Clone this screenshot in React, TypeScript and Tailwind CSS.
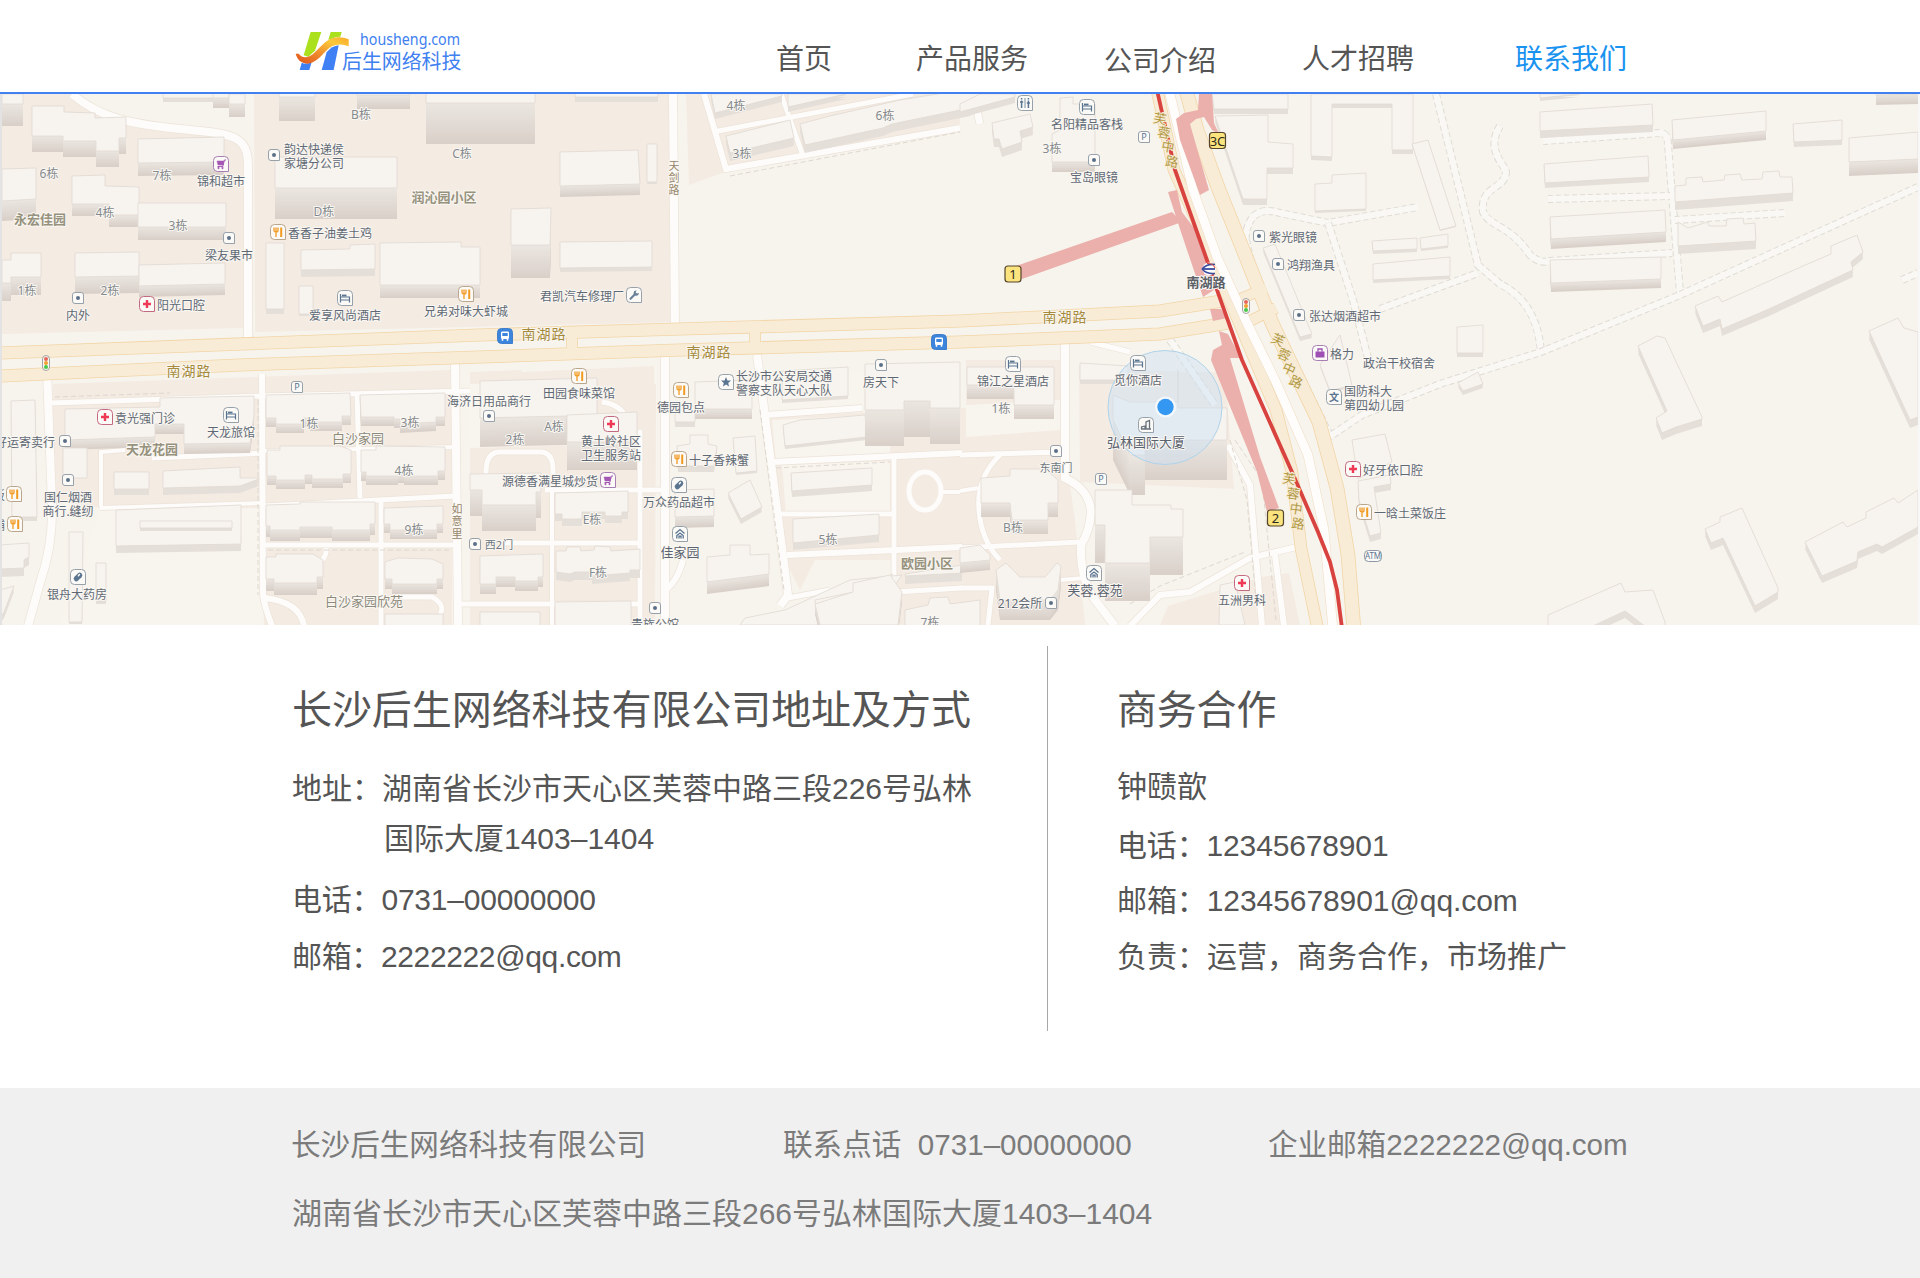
import React from "react";

type Building = [string, number];
type Label = [string, number, number, string?];
type Pin = [string, number, number];

const box = (x: number, y: number, w: number, h: number, side: number): Building => [
  `${x},${y} ${x + w},${y} ${x + w},${y + h} ${x},${y + h}`,
  side,
];

const estates = [
  "2,94 72,94 100,114 130,123 236,138 243,155 243,328 2,334",
  "254,94 670,94 673,322 255,332",
  "686,94 960,94 960,124 725,172 689,185",
  "53,384 452,370 452,625 264,625 262,508 100,508 53,500",
  "470,372 522,370 522,384 656,384 655,625 470,625",
  "480,374 654,366 654,625 480,625",
  "764,417 960,408 1065,412 1065,450 1075,520 1085,625 900,625 896,560 815,560 800,590 785,560",
  "1079,366 1180,372 1225,372 1234,489 1080,482",
  "1262,577 1289,573 1300,625 1160,625 1168,606",
  "966,360 1060,360 1062,430 966,437",
];

const creams = [
  "100,508 262,508 262,625 60,625",
  "764,385 862,372 864,406 766,412",
  "772,420 890,414 890,455 776,462",
  "782,465 890,461 890,512 786,515",
  "966,405 1060,400 1062,430 966,437",
  "470,384 530,382 597,380 597,445 470,448",
];

const buildings: Building[] = [
  box(2, 94, 21, 10, 22),
  ["32,106 64,106 64,112 95,113 95,118 126,117 126,138 119,138 119,151 96,151 96,141 63,141 63,136 32,136", 16],
  ["138,139 224,137 224,162 138,163", 13],
  ["2,169 36,168 36,199 2,201", 20],
  ["72,176 105,175 105,186 139,187 139,215 109,215 109,204 72,204", 12],
  box(138, 203, 88, 24, 13),
  ["2,260 11,260 11,253 41,253 41,277 11,277 11,283 2,283", 18],
  ["75,253 139,252 139,276 75,277", 17],
  ["139,265 225,263 225,284 139,286", 11],
  box(163, 90, 51, 8, 4),
  box(213, 90, 16, 8, 10),
  box(229, 94, 16, 10, 13),
  box(279, 85, 36, 12, 24),
  box(357, 85, 53, 10, 14),
  box(426, 88, 109, 15, 41),
  box(275, 157, 122, 31, 31),
  box(266, 243, 18, 66, 5),
  ["301,250 350,249 350,245 375,244 375,269 301,270", 7],
  box(299, 286, 14, 28, 2),
  ["380,243 461,242 461,247 480,247 480,285 380,285", 13],
  box(575, 88, 83, 9, 5),
  ["560,152 638,150 640,184 560,186", 11],
  box(647, 144, 10, 38, 2),
  ["511,209 551,208 550,245 511,245", 33],
  ["560,242 652,241 652,267 560,268", 4],
  ["711,94 782,94 782,96 715,113", 6],
  ["788,94 846,94 788,107", 5],
  ["726,136 790,120 794,138 730,153", 8],
  ["800,124 830,116 900,100 950,92 990,92 970,108 892,124 883,128 805,145", 8],
  ["980,94 1015,94 1015,97 960,112 960,104", 6],
  ["992,123 1030,114 1033,127 1020,131 1022,142 1002,149 999,139 994,139", 8],
  ["1060,98 1073,97 1073,104 1095,104 1095,162 1052,162 1052,134 1060,130", 10],
  ["1212,94 1288,94 1288,109 1214,109", 5],
  ["1215,116 1268,115 1268,142 1293,144 1293,168 1267,168 1267,199 1243,199", 6],
  ["1311,94 1413,94 1413,150 1392,150 1392,104 1332,104 1332,157 1311,156", 4],
  ["1332,175 1366,173 1366,209 1315,211 1315,184 1332,183", 2],
  ["1372,241 1417,238 1417,249 1373,251", 3],
  ["1420,238 1448,234 1448,246 1421,249", 2],
  ["1373,264 1450,257 1450,276 1373,280", 3],
  ["1412,144 1428,140 1456,226 1440,230", 1],
  ["1263,248 1275,244 1312,334 1300,337", 4],
  ["1540,94 1580,94 1540,98", 3],
  ["1540,112 1652,104 1653,125 1540,131", 7],
  ["1672,120 1766,111 1766,131 1673,140", 9],
  ["1793,124 1842,120 1842,140 1794,142", 5],
  ["1849,138 1918,132 1918,159 1849,162", 14],
  ["1876,88 1918,88 1918,94 1876,95", 10],
  ["1544,164 1648,156 1649,177 1545,183", 5],
  ["1550,217 1665,210 1666,232 1551,239", 10],
  ["1550,260 1661,257 1661,279 1551,283", 9],
  ["1675,186 1686,185 1686,178 1702,177 1703,182 1724,180 1725,175 1740,174 1742,180 1762,179 1763,172 1779,171 1780,177 1792,177 1793,193 1675,202", 8],
  ["1678,222 1688,228 1708,222 1709,226 1726,226 1727,219 1743,218 1744,224 1755,223 1756,241 1678,246", 8],
  ["1457,327 1483,325 1483,353 1457,353", 4],
  ["1695,306 1718,296 1722,302 1803,266 1831,254 1831,246 1857,235 1863,252 1851,262 1853,270 1812,289 1769,309 1722,329 1720,319 1703,326", 7],
  ["1869,331 1898,318 1904,328 1918,332 1918,417 1910,420", 8],
  ["1638,346 1657,336 1665,338 1702,417 1702,419 1676,427 1662,433 1656,418 1667,411", 7],
  ["1458,383 1478,372 1483,384 1463,391", 4],
  ["1705,529 1720,522 1720,517 1742,508 1778,588 1778,592 1755,606 1723,538 1711,543", 7],
  ["1805,542 1843,522 1847,527 1866,518 1866,512 1894,498 1898,503 1918,490 1918,527 1911,531 1882,547 1877,544 1858,552 1857,561 1822,576", 7],
  ["1548,615 1621,583 1625,592 1653,590 1665,622 1665,630 1650,630 1625,611 1595,625 1560,635 1548,635", 7],
  ["11,401 35,400 37,517 12,517", 4],
  ["65,409 160,407 160,398 254,396 254,415 250,443 184,444 184,424 155,424 155,437 65,440", 10],
  box(63, 448, 24, 30, 0),
  box(114, 472, 35, 17, 6),
  ["163,471 240,467 240,478 259,478 259,479 240,486 163,488", 7],
  ["116,510 241,505 241,544 116,546", 7],
  box(140, 521, 92, 7, 3),
  ["69,532 83,532 82,622 69,622", 2],
  box(96, 563, 10, 38, 3),
  ["0,545 29,543 29,557 24,560 24,568 0,569", 8],
  ["0,590 14,586 4,612 0,618", 6],
  ["266,395 350,393 351,416 342,416 342,422 310,422 310,418 304,418 304,424 276,424 276,418 266,418", 9],
  ["360,395 445,393 445,417 436,417 436,422 400,424 400,419 394,419 394,417 361,417", 9],
  ["267,450 280,450 280,446 340,446 351,450 351,474 343,474 343,479 312,479 312,475 305,475 305,480 276,480 276,476 267,476", 9],
  ["361,450 376,450 376,446 445,447 445,471 438,471 438,476 404,476 404,474 398,474 398,476 366,476 366,472 361,472", 9],
  ["266,505 300,504 300,502 375,502 375,524 370,524 370,530 332,530 332,527 300,527 300,530 270,530 270,526 266,526", 11],
  ["384,508 443,506 443,524 437,524 437,530 390,530 390,524 384,524", 9],
  ["266,557 276,557 276,554 313,554 323,560 323,577 317,577 317,583 274,583 274,579 266,579", 12],
  ["385,562 398,558 432,559 443,564 443,579 437,579 437,584 392,584 392,579 385,579", 10],
  box(385, 614, 58, 20, 0),
  ["480,381 597,378 597,422 567,442 567,416 480,418", 29],
  ["567,415 637,412 637,442 567,442", 28],
  ["470,474 541,473 541,492 536,492 536,505 482,505 482,490 470,490", 26],
  ["555,493 628,491 628,512 622,512 622,516 605,516 605,512 582,512 582,519 562,519 562,514 555,514", 7],
  ["556,551 566,551 567,547 580,547 581,551 594,550 595,546 610,547 611,551 640,549 640,570 630,570 630,573 592,576 592,572 575,572 570,574 556,572", 8],
  ["480,556 543,554 543,577 538,577 538,581 515,581 515,577 496,577 496,584 480,584", 10],
  ["480,612 540,612 540,630 480,630", 0],
  ["555,602 631,601 631,630 555,630", 0],
  ["695,382 752,380 752,409 695,409", 10],
  box(675, 406, 20, 16, 5),
  ["782,371 848,367 848,396 782,400", 3],
  ["677,446 690,444 690,435 708,435 708,444 717,446 714,466 678,466", 6],
  ["733,438 755,436 757,471 736,473", 2],
  ["675,490 714,489 714,516 675,517", 11],
  ["728,493 750,480 762,507 741,519", 5],
  ["783,425 800,420 830,418 865,415 867,437 785,446", 3],
  ["791,473 872,468 872,485 792,491", 6],
  ["793,519 879,514 879,535 793,543", 7],
  ["707,557 730,555 730,545 750,545 750,555 769,554 769,574 707,582", 12],
  ["865,364 960,362 960,408 930,408 930,401 904,401 904,410 865,410", 36],
  ["850,580 902,575 895,585 890,576 893,574 854,592 815,600 818,625 740,625 745,618 785,610", 0],
  ["815,604 853,592 853,583 890,575 902,592 898,625 820,625", 10],
  ["905,574 962,565 962,573 905,576", 8],
  ["905,610 928,605 930,598 948,597 950,604 980,600 980,630 905,630", 0],
  ["967,367 1054,367 1054,405 1014,405 1014,385 967,385", 14],
  ["1080,363 1128,366 1128,380 1080,380", 4],
  ["1113,395 1130,402 1178,402 1178,370 1178,408 1227,408 1227,440 1145,440 1145,455 1130,455 1113,420", 40],
  ["981,478 1010,476 1010,469 1045,469 1058,480 1058,503 1048,503 1048,520 1012,520 1010,503 981,503", 14],
  ["1095,490 1132,490 1132,505 1171,505 1171,509 1183,509 1183,537 1150,537 1150,563 1105,563 1105,525 1095,525", 38],
  ["996,570 1006,563 1020,577 1045,577 1057,563 1061,566 1058,590 1050,600 1000,600", 20],
  ["960,548 980,545 990,555 990,560 960,563", 10],
  ["1220,585 1235,582 1245,625 1219,625", 0],
  ["1352,440 1385,434 1392,462 1358,479", 0],
  ["1358,481 1390,475 1391,484 1374,487 1381,533 1370,536 1359,500", 6],
  ["1320,365 1340,335 1352,385 1330,391", 2],
];

const lanes: [string, number][] = [
  ["M72,94 C100,118 130,124 180,129 S248,134 248,165 V340", 8],
  ["M673,94 L675,330", 8],
  ["M704,94 L726,169 L960,128", 6],
  ["M713,132 L913,94", 5],
  ["M781,94 L802,153", 5],
  ["M973,94 L980,124", 7],
  ["M47,372 L52,505 Q53,545 40,583 L28,626", 8],
  ["M50,403 L262,396 L470,391", 5],
  ["M262,374 L263,595 Q264,605 272,626", 6],
  ["M265,598 Q300,602 304,626", 6],
  ["M326,548 Q327,555 322,560", 5],
  ["M357,392 L360,498", 5],
  ["M381,500 V626", 5],
  ["M265,506 L455,496", 5],
  ["M265,545 H455", 5],
  ["M100,508 L262,503", 4],
  ["M101,507 V452 L125,450", 4],
  ["M152,458 L265,453", 5],
  ["M265,451 L460,447", 4],
  ["M455,362 L458,626", 8],
  ["M402,597 H432 Q446,605 440,614", 5],
  ["M665,355 V626", 8],
  ["M757,355 L763,400 L788,595 L780,606", 8],
  ["M765,415 L862,408", 6],
  ["M772,462 L962,453", 6],
  ["M780,514 H892", 5],
  ["M787,555 L962,547", 6],
  ["M788,598 L830,590", 5],
  ["M894,458 V592 L962,588", 5],
  ["M943,492 H960", 4],
  ["M460,604 H640", 5],
  ["M552,486 V626", 4],
  ["M640,430 V626", 5],
  ["M486,492 V470 Q487,452 500,452 H540 Q553,452 553,470 V480", 5],
  ["M500,543 H640", 5],
  ["M545,490 H662", 5],
  ["M602,402 Q625,405 629,426", 5],
  ["M683,560 Q678,580 666,590", 6],
  ["M1065,342 V478 Q1090,490 1091,512 Q1090,530 1081,545 Q1080,580 1095,600 L1115,626", 8],
  ["M960,548 L1080,542", 5],
  ["M960,455 L1062,452", 5],
  ["M1000,455 Q976,478 979,510 Q981,540 1000,560", 5],
  ["M960,491 L978,488", 4],
  ["M960,588 H992 L988,625", 5],
  ["M1060,580 L1085,578", 4],
  ["M1130,626 L1160,595 L1190,592 L1250,558 L1297,547", 6],
  ["M1228,445 L1250,485 L1262,626", 6],
  ["M1275,555 L1284,626", 6],
  ["M1090,342 L1130,352", 5],
];

const dashedLanes = [
  "M1248,270 C1238,215 1258,206 1280,213 L1328,223 L1418,207",
  "M1328,223 L1353,300 L1370,366",
  "M1246,240 L1256,285 L1300,375 L1330,436",
  "M1380,309 L1478,273",
  "M1436,94 L1478,265 L1500,284 Q1537,302 1541,352",
  "M1500,126 C1485,150 1505,165 1506,172 C1505,190 1480,185 1483,212 C1490,227 1510,225 1530,255 Q1540,264 1550,261 L1672,253",
  "M1543,141 L1660,133 Q1668,133 1668,145 L1680,293",
  "M1548,199 L1670,196",
  "M1675,220 L1785,213",
  "M1326,439 L1362,415 L1440,384 L1541,352 L1680,295 L1918,187",
  "M1902,280 L1918,273",
  "M1170,340 L1215,405",
];

const dashedEdges = [
  "M730,176 L960,132",
  "M55,397 L170,393",
  "M258,400 V595",
  "M268,550 H450",
  "M776,468 L890,462",
  "M760,410 L784,590",
  "M1230,440 L1247,500 L1256,600",
  "M1235,440 L1262,480 L1276,620",
  "M1130,604 L1160,586 L1245,552",
];

const highways: [string, number][] = [
  ["M0,353 L480,335 L680,329 L960,321 L1160,311 L1222,301", 11.5],
  ["M0,376 L240,365 L480,357 L680,350 L960,342 L1160,334 L1228,323", 11.5],
  ["M572,328 V352", 10],
  ["M755,325 V348", 10],
  ["M1240,299 L1266,288", 10],
  ["M1250,321 L1276,308", 10],
  ["M1157,90 L1174,170 L1198,223 L1213,263 L1234,310 L1255,360 L1276,410 L1292,472 L1301,548 L1318,630", 11],
  ["M1186,90 L1197,130 L1219,190 L1246,257 L1272,323 L1287,355 L1319,422 L1337,488 L1348,555 L1354,630", 13],
];

const medians = ["M1169,90 L1193,190 L1217,257 L1247,323 L1275,380 L1308,455 L1324,530 L1333,630"];

const platforms = [
  "1013,267 1172,212 1182,222 1022,279",
  "1168,192 1177,190 1182,212 1194,228 1206,258 1214,290 1203,297 1187,250 1178,223",
  "1210,309 1221,309 1227,318 1213,321",
  "1219,331 1228,334 1241,358 1230,358 1260,457 1279,508 1267,512 1257,472 1211,360 1213,350 1222,345",
  "1176,119 1184,113 1198,110 1199,94 1212,94 1214,123 1219,134 1212,130 1204,117 1196,119 1190,124 1209,190 1200,195 1180,140",
];

const pois: Label[] = [
  ["内外", 78, 315], ["阳光口腔", 181, 305], ["锦和超市", 221, 181], ["梁友果市", 229, 255],
  ["韵达快递侯", 314, 149], ["家塘分公司", 314, 163], ["香香子油姜土鸡", 330, 233],
  ["爱享风尚酒店", 345, 315], ["兄弟对味大虾城", 466, 311], ["君凯汽车修理厂", 582, 296],
  ["名阳精品客栈", 1087, 124], ["宝岛眼镜", 1094, 177], ["紫光眼镜", 1293, 237],
  ["鸿翔渔具", 1311, 265], ["张达烟酒超市", 1345, 316], ["格力", 1342, 354],
  ["政治干校宿舍", 1399, 363], ["袁光强门诊", 145, 418], ["天龙旅馆", 231, 432],
  ["好运寄卖行", 25, 442], ["国仁烟酒", 68, 497], ["商行.缝纫", 68, 511], ["银舟大药房", 77, 594],
  ["海济日用品商行", 489, 401], ["田园食味菜馆", 579, 393], ["黄土岭社区", 611, 441],
  ["卫生服务站", 611, 455], ["源德香满星城炒货", 550, 481], ["德园包点", 681, 407],
  ["长沙市公安局交通", 784, 376], ["警察支队天心大队", 784, 390], ["房天下", 881, 382],
  ["十子香辣蟹", 719, 460], ["万众药品超市", 679, 502], ["佳家园", 680, 552, "mid"],
  ["贵族公馆", 655, 624], ["锦江之星酒店", 1013, 381], ["觅你酒店", 1138, 380],
  ["弘林国际大厦", 1146, 442, "mid"], ["东南门", 1056, 467, "small"], ["212会所", 1020, 603],
  ["芙蓉.蓉苑", 1095, 590, "mid"], ["五洲男科", 1242, 600], ["国防科大", 1368, 391],
  ["第四幼儿园", 1374, 405], ["好牙依口腔", 1393, 470], ["一晗土菜饭庄", 1410, 513],
  ["西2门", 499, 544, "small"], ["饭", -1, 495], ["铺", -1, 525],
  ["6栋", 49, 173, "block"], ["7栋", 162, 175, "block"], ["4栋", 105, 212, "block"],
  ["3栋", 178, 225, "block"], ["1栋", 27, 290, "block"], ["2栋", 110, 290, "block"],
  ["B栋", 361, 114, "block"], ["C栋", 462, 153, "block"], ["D栋", 324, 211, "block"],
  ["4栋", 736, 105, "block"], ["6栋", 885, 115, "block"], ["3栋", 742, 153, "block"],
  ["3栋", 1052, 148, "block"], ["1栋", 309, 423, "block"], ["3栋", 410, 422, "block"],
  ["4栋", 404, 470, "block"], ["9栋", 414, 529, "block"], ["A栋", 554, 426, "block"],
  ["2栋", 515, 439, "block"], ["E栋", 592, 519, "block"], ["F栋", 598, 572, "block"],
  ["5栋", 828, 539, "block"], ["7栋", 930, 622, "block"], ["1栋", 1001, 408, "block"],
  ["B栋", 1013, 527, "block"],
  ["永宏佳园", 40, 219, "estate"], ["润沁园小区", 444, 197, "estate"],
  ["天龙花园", 152, 449, "estate"], ["欧园小区", 927, 563, "estate"],
  ["白沙家园", 358, 438, "garden"], ["白沙家园欣苑", 364, 601, "garden"],
  ["南湖路", 544, 334, "road"], ["南湖路", 709, 352, "road"], ["南湖路", 1065, 317, "road"],
  ["南湖路", 189, 371, "road"], ["南湖路", 1206, 282, "station"],
  ["天", 674, 165, "lane"], ["剑", 674, 177, "lane"], ["路", 674, 189, "lane"],
  ["如", 457, 508, "lane"], ["意", 457, 520, "lane"], ["里", 457, 533, "lane"],
];

const labelClass: Record<string, string> = {
  poi: "fill-[#5f6975] text-[12px]",
  mid: "fill-[#5a6370] text-[13px]",
  small: "fill-[#6f7780] text-[11px]",
  block: "fill-[#858a8e] text-[12px]",
  estate: "fill-[#96927e] text-[13px] font-bold",
  garden: "fill-[#8d8a7c] text-[13px]",
  road: "fill-[#a58a3c] text-[14px] tracking-[1px]",
  station: "fill-[#5b5f68] text-[13px] font-bold",
  lane: "fill-[#97876d] text-[11px]",
};

const avenue: [string, number, number, number][] = [
  ["芙", 1160, 119, 10], ["蓉", 1164, 133, 10], ["中", 1168, 147, 10], ["路", 1172, 162, 10],
  ["芙", 1278, 340, 24], ["蓉", 1284, 355, 24], ["中", 1289, 369, 24], ["路", 1296, 382, 24],
  ["芙", 1289, 479, 8], ["蓉", 1293, 494, 8], ["中", 1296, 509, 8], ["路", 1298, 524, 8],
];

const pins: Pin[] = [
  ["dot", 274, 155], ["dot", 229, 238], ["dot", 78, 298], ["dot", 65, 441], ["dot", 68, 480],
  ["dot", 1094, 160], ["dot", 1259, 236], ["dot", 1278, 264], ["dot", 1299, 315], ["dot", 489, 416],
  ["dot", 881, 365], ["dot", 655, 608], ["dot", 1056, 451], ["dot", 1051, 603], ["dot", 475, 544],
  ["food", 278, 232], ["food", 466, 294], ["food", 14, 494], ["food", 15, 524], ["food", 579, 376],
  ["food", 681, 390], ["food", 679, 459], ["food", 1364, 512],
  ["hotel", 345, 298], ["hotel", 1087, 107], ["hotel", 231, 415], ["hotel", 1013, 364], ["hotel", 1138, 363],
  ["cart", 221, 164], ["cart", 608, 480],
  ["cross", 147, 304], ["cross", 105, 417], ["cross", 611, 424], ["cross", 1353, 469], ["cross", 1242, 583],
  ["bus", 505, 336], ["bus", 939, 342],
  ["wrench", 634, 295], ["pill", 78, 577], ["pill", 679, 485], ["star", 726, 382],
  ["house", 680, 534], ["house", 1094, 573],
  ["park", 297, 387], ["park", 1101, 479], ["park", 1144, 137],
  ["toilet", 1025, 103], ["bag", 1320, 353], ["school", 1334, 397], ["atm", 1373, 556],
  ["tower", 1146, 425], ["signal", 46, 363], ["signal", 1246, 306],
];

const frameColor: Record<string, string> = {
  food: "#b9a68c", cross: "#c46a80", cart: "#a77fb4", bag: "#a77fb4", bus: "#3f7fcb",
};

function Glyph({ kind }: { kind: string }) {
  switch (kind) {
    case "dot":
      return <circle r={2} fill="#5b7088" />;
    case "food":
      return (
        <g fill="none" stroke="#f29a1f">
          <path d="M-4,-4.5 V-1.4 Q-4,0 -2,0 Q0,0 0,-1.4 V-4.5 M-2,-4.5 V5" strokeWidth={1.3} />
          <path d="M3.2,-4.5 V5" strokeWidth={2} />
        </g>
      );
    case "hotel":
      return (
        <g fill="none" stroke="#5b7591" strokeWidth={1.2}>
          <path d="M-4.5,-4 V4.5 M-4.5,2 H4.5 M4.5,4.5 V-1 H-4.5" />
          <path d="M-3,-2.5 H1.5" strokeWidth={1.8} />
        </g>
      );
    case "cart":
      return (
        <g stroke="#a458b4" fill="#a458b4">
          <path d="M5,-4 H3.4 L1.8,2.5 H-3.5" fill="none" strokeWidth={1} />
          <path d="M-4,-3 H3 L2,1 H-3 Z" strokeWidth={0.5} />
          <circle cx={-2.5} cy={4} r={0.7} />
          <circle cx={1.5} cy={4} r={0.7} />
        </g>
      );
    case "cross":
      return <path d="M-4,0 H4 M0,-4 V4" stroke="#ee3a55" strokeWidth={2.4} />;
    case "bus":
      return (
        <g>
          <rect x={-4} y={-4.5} width={8} height={7.5} rx={1.2} fill="#fff" />
          <rect x={-2.7} y={-3} width={5.4} height={3} fill="#3c84dc" />
          <path d="M-2.5,3 V4.8 M2.5,3 V4.8" stroke="#fff" strokeWidth={1.6} />
        </g>
      );
    case "wrench":
      return (
        <g>
          <path d="M-3.5,3.8 L1.5,-1.2" stroke="#6b8299" strokeWidth={2.2} strokeLinecap="round" />
          <path d="M2.5,-4.5 A2.6,2.6 0 1 0 4.8,-2 L2.8,-1.4 L1.6,-2.6 Z" fill="#6b8299" />
        </g>
      );
    case "pill":
      return (
        <g transform="rotate(-45)">
          <rect x={-5} y={-2.6} width={10} height={5.2} rx={2.6} fill="#5b7591" />
          <rect x={0.5} y={-1.4} width={3} height={1.4} rx={0.7} fill="#fff" />
        </g>
      );
    case "star":
      return <path d="M0,-5 L1.4,-1.6 5,-1.4 2.2,0.9 3.1,4.4 0,2.5 -3.1,4.4 -2.2,0.9 -5,-1.4 -1.4,-1.6 Z" fill="#5b7591" />;
    case "house":
      return (
        <g fill="none" stroke="#5b7591" strokeWidth={1.3}>
          <path d="M-4.5,-0.5 L0,-4.5 L4.5,-0.5" />
          <path d="M-3.2,4.5 V1.6 L0,-1 L3.2,1.6 V4.5 M-1,4.5 V2.2 H1 V4.5" />
        </g>
      );
    case "toilet":
      return (
        <g fill="none" stroke="#5b7591" strokeWidth={1.5}>
          <path d="M0,-5 V5" strokeWidth={0.8} />
          <path d="M-3.4,-2.5 V5 M3.4,-2.5 V5 M-5,-1 H-1.8 M1.8,0 H5" />
          <path d="M-3.4,-5 V-3.6 M3.4,-5 V-3.6" />
        </g>
      );
    case "bag":
      return (
        <g>
          <rect x={-4.5} y={-1.5} width={9} height={6} fill="#9d4fb4" />
          <path d="M-2,-1.5 V-4 H2 V-1.5" fill="none" stroke="#9d4fb4" strokeWidth={1.3} />
        </g>
      );
    case "tower":
      return <path d="M-5,4 H5 M-4.5,4 V2 L-1,1 V4 M0,4 V-3 L3.5,-4.5 V4" fill="none" stroke="#6a727c" strokeWidth={1.3} />;
    default:
      return null;
  }
}

function MapPin({ pin: [kind, x, y] }: { pin: Pin }) {
  if (kind === "signal") {
    return (
      <g transform={`translate(${x} ${y})`}>
        <rect x={-3.5} y={-7.5} width={7} height={15} rx={3.5} fill="#fbf8f3" stroke="#8e8f90" strokeWidth={0.8} />
        <circle cy={-4} r={2} fill="#e4685a" />
        <circle r={2} fill="#f0a030" />
        <circle cy={4} r={2} fill="#48c848" />
      </g>
    );
  }
  if (kind === "atm") {
    return (
      <g transform={`translate(${x} ${y})`}>
        <rect x={-8.5} y={-5.5} width={17} height={11} rx={4} fill="#fbfaf8" stroke="#8c98a4" />
        <text y={3.2} textAnchor="middle" className="fill-[#5b7591] text-[8px]">ATM</text>
      </g>
    );
  }
  const small = kind === "dot" || kind === "park";
  const r = small ? 5.5 : 7.5;
  const c = small ? 2.5 : 4;
  const frame = `M${-r + c},${-r} H${r - c} Q${r},${-r} ${r},${-r + c} V${r} H${-r + c} Q${-r},${r} ${-r},${r - c} V${-r + c} Q${-r},${-r} ${-r + c},${-r} Z`;
  return (
    <g transform={`translate(${x} ${y})`}>
      <path d={frame} fill={kind === "bus" ? "#3c84dc" : "#fbfaf7"} stroke={frameColor[kind] ?? "#97a1aa"} />
      <Glyph kind={kind} />
      {kind === "park" && <text y={3.4} textAnchor="middle" className="fill-[#5b7591] text-[9px]">P</text>}
      {kind === "school" && <text y={3.8} textAnchor="middle" className="fill-[#5b7591] text-[10px] font-bold">文</text>}
    </g>
  );
}

function mix(t: number) {
  const from = [236, 231, 226];
  const to = [217, 208, 201];
  return `rgb(${from.map((v, i) => Math.round(v + (to[i] - v) * t)).join(",")})`;
}

function Block({ shape: [points, side] }: { shape: Building }) {
  const layers: React.ReactNode[] = [];
  for (let d = side; d > 0; d -= 2) {
    const tone = side > 8 ? d / side : 0.35;
    layers.push(<polygon key={d} points={points} transform={`translate(0 ${d})`} fill={mix(tone)} />);
  }
  return (
    <g>
      {layers}
      <polygon points={points} fill="#f7f4f0" stroke="#e2dbd4" strokeWidth={0.9} />
    </g>
  );
}

function ExitBadge({ x, y, text }: { x: number; y: number; text: string }) {
  return (
    <g transform={`translate(${x} ${y})`}>
      <rect x={-8} y={-8} width={16} height={16} rx={3} fill="#fbe37e" stroke="#54452c" strokeWidth={1.2} />
      <text y={5} textAnchor="middle" className="fill-[#2d2820] text-[13px]">{text}</text>
    </g>
  );
}

function CityMap() {
  return (
    <svg
      viewBox="0 94 1920 531"
      className="block h-[531px] w-full shrink-0 font-['Noto_Sans','Noto_Sans_CJK_SC',sans-serif]"
    >
      <rect x={0} y={94} width={1920} height={531} fill="#f7f4ed" />
      {estates.map((p) => <polygon key={p} points={p} fill="#f4ebe3" />)}
      {creams.map((p) => <polygon key={p} points={p} fill="#f8f4ee" />)}

      {dashedLanes.map((d) => (
        <g key={d} fill="none">
          <path d={d} stroke="#dfdcd5" strokeWidth={8} strokeDasharray="5 3" />
          <path d={d} stroke="#faf8f4" strokeWidth={6} />
        </g>
      ))}
      {lanes.map(([d, w]) => <path key={d} d={d} fill="none" stroke="#ece3d8" strokeWidth={w + 1.4} />)}
      {lanes.map(([d, w]) => <path key={d} d={d} fill="none" stroke="#fdfcfa" strokeWidth={w} />)}
      {dashedEdges.map((d) => <path key={d} d={d} fill="none" stroke="#ded8cf" strokeDasharray="5 3" />)}
      <ellipse cx={925} cy={491} rx={16} ry={19} fill="none" stroke="#fdfcfa" strokeWidth={5} />

      {buildings.map((b, i) => <Block key={i} shape={b} />)}

      {highways.map(([d, w]) => <path key={d} d={d} fill="none" stroke="#f2d5a6" strokeWidth={w + 1.6} />)}
      {highways.map(([d, w]) => <path key={d} d={d} fill="none" stroke="#f8ecd7" strokeWidth={w} />)}
      {medians.map((d) => <path key={d} d={d} fill="none" stroke="#f1dfc8" strokeWidth={10} />)}
      {medians.map((d) => <path key={d} d={d} fill="none" stroke="#fefdfb" strokeWidth={8.8} />)}
      {platforms.map((p) => <polygon key={p} points={p} fill="#ebb0ab" />)}
      <path
        d="M1157,90 L1175,170 L1208,263 L1217,290 L1242,360 L1292,472 L1318,532 L1330,562 L1337,590 L1342,628"
        fill="none"
        stroke="#d9433f"
        strokeWidth={3.8}
        strokeLinejoin="round"
      />

      <circle cx={1165} cy={407.5} r={57} fill="#c9e1f5" fillOpacity={0.45} stroke="#b0d3ea" />

      <g stroke="#faf7f2" strokeWidth={2} strokeLinejoin="round" className="[paint-order:stroke]">
        {pois.map(([text, x, y, kind], i) => (
          <text key={i} x={x} y={y + 4.5} textAnchor="middle" className={labelClass[kind ?? "poi"]}>
            {text}
          </text>
        ))}
        {avenue.map(([text, x, y, angle], i) => (
          <text
            key={i}
            x={0}
            y={4.5}
            textAnchor="middle"
            transform={`translate(${x} ${y}) rotate(${angle})`}
            className="fill-[#b29a45] text-[13px]"
            stroke="#f8ecd7"
          >
            {text}
          </text>
        ))}
      </g>

      {pins.map((p, i) => <MapPin key={i} pin={p} />)}

      <circle cx={1165.5} cy={407} r={10.5} fill="#f3f8fc" />
      <circle cx={1165.5} cy={407} r={8.2} fill="#3498f3" />

      <g transform="translate(1209 269)">
        <circle r={6.5} fill="#fff" />
        <path d="M-7,0 Q-2,-5.5 6,-4.5 M-7,0 Q-2,5.5 6,4.5" fill="none" stroke="#3a4b9c" strokeWidth={1.6} />
        <path d="M-6,0 H6" stroke="#3a4b9c" strokeWidth={1.8} />
        <path d="M-2,-5.5 Q4,-6 6,-1" fill="none" stroke="#d9433f" strokeWidth={1} />
      </g>

      <ExitBadge x={1013} y={274} text="1" />
      <ExitBadge x={1217.5} y={140.5} text="3C" />
      <ExitBadge x={1275.5} y={518} text="2" />

      <rect x={0} y={94} width={2} height={531} fill="#e3e3e3" />
      <rect x={1918} y={94} width={2} height={531} fill="#f7f7f7" />
    </svg>
  );
}

function Logo() {
  return (
    <svg viewBox="0 0 570 240" className="h-[80px] w-[190px]">
      <defs>
        <linearGradient id="ribbon" x1="0" y1="1" x2="1" y2="0">
          <stop offset="0" stopColor="#e0521c" />
          <stop offset="0.4" stopColor="#ee8a2c" />
          <stop offset="0.75" stopColor="#fcc93a" />
          <stop offset="1" stopColor="#f9a92d" />
        </linearGradient>
      </defs>
      <path d="M77,36 H109 L90,92 L70,110 L56,106 Z" fill="#abe01c" />
      <path d="M137,36 H170 L166,50 Q150,50 130,60 Z" fill="#abe01c" />
      <path d="M50,128 Q64,134 80,126 L73,150 H44 Z" fill="#4080f5" />
      <path d="M125,97 Q140,78 161,76 L146,150 H110 Z" fill="#4080f5" />
      <path
        d="M32,103 Q36,98 42,102 Q58,122 84,102 C112,76 130,48 165,52 Q182,54 191,58 V79 Q165,68 142,78 C118,90 100,130 66,131 Q40,130 32,103 Z"
        fill="url(#ribbon)"
      />
      <text x="225" y="74" textLength="300" lengthAdjust="spacingAndGlyphs" className="fill-[#4080f0] font-['Noto_Sans',sans-serif] text-[46px]">
        housheng.com
      </text>
      <text x="171" y="148" textLength="358" lengthAdjust="spacingAndGlyphs" className="fill-[#4080f0] font-['Noto_Sans_CJK_SC',sans-serif] text-[60px] font-normal">
        后生网络科技
      </text>
    </svg>
  );
}

export default function App() {
  return (
    <div className="flex h-[1278px] w-[1920px] flex-col overflow-hidden bg-white font-['Liberation_Sans','Noto_Sans_CJK_SC',sans-serif] text-[#555555]">
      <header className="flex h-[94px] shrink-0 items-start border-b-2 border-[#4080f0] pl-[285px]">
        <div className="mt-[20px] h-[72px] w-[190px]">
          <Logo />
        </div>
        <nav className="mt-[40px] ml-[301px] flex text-[28px] leading-[40px] whitespace-nowrap">
          <a>首页</a>
          <a className="ml-[84px]">产品服务</a>
          <a className="ml-[76px] pt-[2px]">公司介绍</a>
          <a className="ml-[86px]">人才招聘</a>
          <a className="ml-[101px] text-[#1a93f0]">联系我们</a>
        </nav>
      </header>

      <CityMap />

      <main className="flex h-[463px] shrink-0 pt-[21px] pl-[292px] text-[30px] leading-[40px] whitespace-nowrap">
        <section className="h-[385px] w-[756px] border-r border-[#a8a8a8] pt-[39px]">
          <h1 className="text-[40px] leading-[50px] tracking-[-0.07px]">长沙后生网络科技有限公司地址及方式</h1>
          <p className="mt-[34px]">地址：湖南省长沙市天心区芙蓉中路三段226号弘林</p>
          <p className="mt-[10px] pl-[92px]">国际大厦1403–1404</p>
          <p className="mt-[21px] tracking-[-0.2px]">电话：0731–00000000</p>
          <p className="mt-[17px] tracking-[-0.36px]">邮箱：2222222@qq.com</p>
        </section>
        <section className="pt-[39px] pl-[69px]">
          <h2 className="text-[40px] leading-[50px] tracking-[-0.2px]">商务合作</h2>
          <p className="mt-[32px]">钟赜歆</p>
          <p className="mt-[19px] tracking-[-0.15px]">电话：12345678901</p>
          <p className="mt-[15px] tracking-[-0.08px]">邮箱：12345678901@qq.com</p>
          <p className="mt-[16px]">负责：运营，商务合作，市场推广</p>
        </section>
      </main>

      <footer className="flex-1 bg-[#f0f0f0] pt-[37px] pl-[291px] text-[29.6px] leading-[40px] whitespace-nowrap text-[#7b7b7b]">
        <div className="flex">
          <span className="w-[492px]">长沙后生网络科技有限公司</span>
          <span className="w-[485px]">联系点话&nbsp; 0731–00000000</span>
          <span className="tracking-[-0.06px]">企业邮箱2222222@qq.com</span>
        </div>
        <p className="mt-[29px] pl-px text-[30px]">湖南省长沙市天心区芙蓉中路三段266号弘林国际大厦1403–1404</p>
      </footer>
    </div>
  );
}
